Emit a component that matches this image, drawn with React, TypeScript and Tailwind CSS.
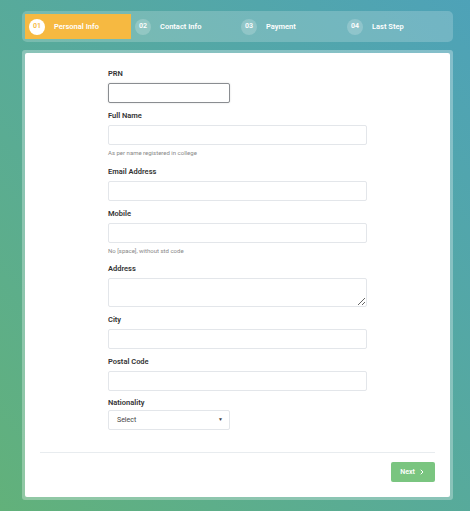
import { ChevronRight } from "lucide-react";

const steps = [
  { no: "01", name: "Personal Info" },
  { no: "02", name: "Contact Info" },
  { no: "03", name: "Payment" },
  { no: "04", name: "Last Step" },
];

function Field({
  label,
  hint,
  children,
}: {
  label: string;
  hint?: string;
  children: React.ReactNode;
}) {
  return (
    <div className="mb-[8px]">
      <div className="mb-[4px] text-[7.5px] leading-[10px] font-semibold text-[#333]">{label}</div>
      {children}
      {hint && <div className="mt-[4px] pb-[1.5px] text-[6px] leading-[8px] text-[#888]">{hint}</div>}
    </div>
  );
}

const inputCls =
  "block h-[20px] w-[259px] rounded-[2px] border border-[#e3e6ea] bg-white px-2 text-[7px] outline-none";

export default function App() {
  return (
    <div
      className="h-[511px] w-full bg-linear-to-tr from-[#62b17a] to-[#4ea2b8] pt-[11px] pl-[22px]"
      style={{ fontFamily: "Roboto, 'Open Sans', sans-serif" }}
    >
      <div className="flex w-[431px] rounded-[5px] bg-white/20 p-[3px]">
        {steps.map((s, i) => (
          <div
            key={s.no}
            className={`flex h-[25px] w-[106px] items-center pl-[4px] ${i === 0 ? "bg-[#f6b941]" : ""}`}
          >
            <div
              className={`flex h-[16px] w-[16px] items-center justify-center rounded-full text-[7px] font-semibold ${
                i === 0 ? "bg-white text-[#f6b941]" : "bg-white/20 text-white"
              }`}
            >
              {s.no}
            </div>
            <span className="ml-[9px] text-[7.5px] font-semibold text-white">{s.name}</span>
          </div>
        ))}
      </div>

      <div className="mt-[8px] w-[431px] rounded-[3px] bg-white/30 p-[3px]">
        <div className="h-[444px] rounded-[2px] bg-white px-[15px] pt-[16px]">
          <div className="pl-[68px]">
            <Field label="PRN">
              <input className="block h-[20px] w-[122px] rounded-[2px] border border-[#8a8d91] bg-white px-2 text-[7px] shadow-[0_0_2px_rgba(0,0,0,0.15)] outline-none" />
            </Field>
            <Field label="Full Name" hint="As per name registered in college">
              <input className={inputCls} />
            </Field>
            <Field label="Email Address">
              <input className={inputCls} />
            </Field>
            <Field label="Mobile" hint="No [space], without std code">
              <input className={inputCls} />
            </Field>
            <Field label="Address">
              <textarea className="block h-[29px] w-[259px] resize-y rounded-[2px] border border-[#e3e6ea] bg-white px-2 text-[7px] outline-none" />
            </Field>
            <Field label="City">
              <input className={inputCls} />
            </Field>
            <Field label="Postal Code">
              <input className={inputCls} />
            </Field>
            <div className="-mt-[1px]">
              <div className="mb-[2px] text-[7.5px] leading-[10px] font-semibold text-[#333]">Nationality</div>
              <div className="flex h-[20px] w-[122px] items-center justify-between rounded-[2px] border border-[#e3e6ea] bg-white pr-[6px] pl-[8px] text-[7px] text-[#444]">
                <span>Select</span>
                <span className="text-[5px]">▼</span>
              </div>
            </div>
          </div>

          <div className="mt-[22px] h-px w-[395px] bg-[#e8ecef]" />
          <div className="mt-[9px] flex justify-end">
            <button className="flex h-[20px] w-[44px] items-center justify-center gap-[3px] rounded-[2px] bg-[#7ac580] text-[7px] font-semibold text-white">
              Next
              <ChevronRight className="h-[8px] w-[8px]" strokeWidth={3} />
            </button>
          </div>
        </div>
      </div>
    </div>
  );
}
